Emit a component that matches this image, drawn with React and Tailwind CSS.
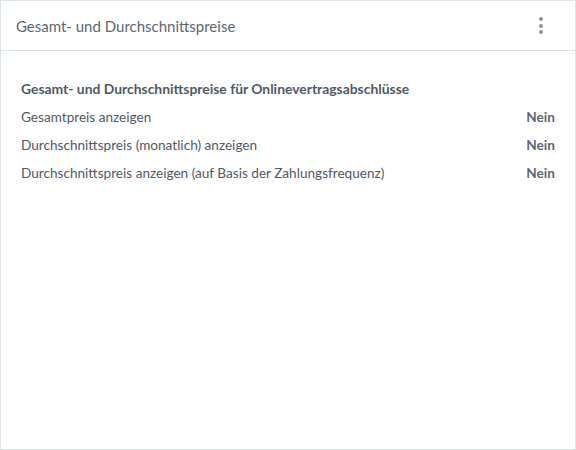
export default function App() {
  const rows = [
    "Gesamtpreis anzeigen",
    "Durchschnittspreis (monatlich) anzeigen",
    "Durchschnittspreis anzeigen (auf Basis der Zahlungsfrequenz)",
  ];
  return (
    <div className="w-[576px] h-[450px] bg-white" style={{ fontFamily: "Lato, 'Noto Sans', sans-serif" }}>
      <div className="h-full border border-[#dde4e4] flex flex-col">
        <div className="h-[50px] border-b border-[#dde4e4] flex items-center justify-between pl-[15px] pr-[32px]">
          <span className="text-[15px] text-[#5d6770] pt-[1px]">Gesamt- und Durchschnittspreise</span>
          <div className="flex flex-col gap-[2.5px] items-center">
            <span className="w-[4px] h-[4px] rounded-full bg-[#8c939a]" />
            <span className="w-[4px] h-[4px] rounded-full bg-[#8c939a]" />
            <span className="w-[4px] h-[4px] rounded-full bg-[#8c939a]" />
          </div>
        </div>
        <div className="pt-[24px] px-[20px] text-[13.6px] text-[#4f5a63]">
          <div className="h-[28px] flex items-center font-bold text-[13.9px]">Gesamt- und Durchschnittspreise für Onlinevertragsabschlüsse</div>
          {rows.map((r) => (
            <div key={r} className="h-[28px] flex items-center justify-between">
              <span>{r}</span>
              <span className="font-bold text-[#5d6770]">Nein</span>
            </div>
          ))}
        </div>
      </div>
    </div>
  );
}
